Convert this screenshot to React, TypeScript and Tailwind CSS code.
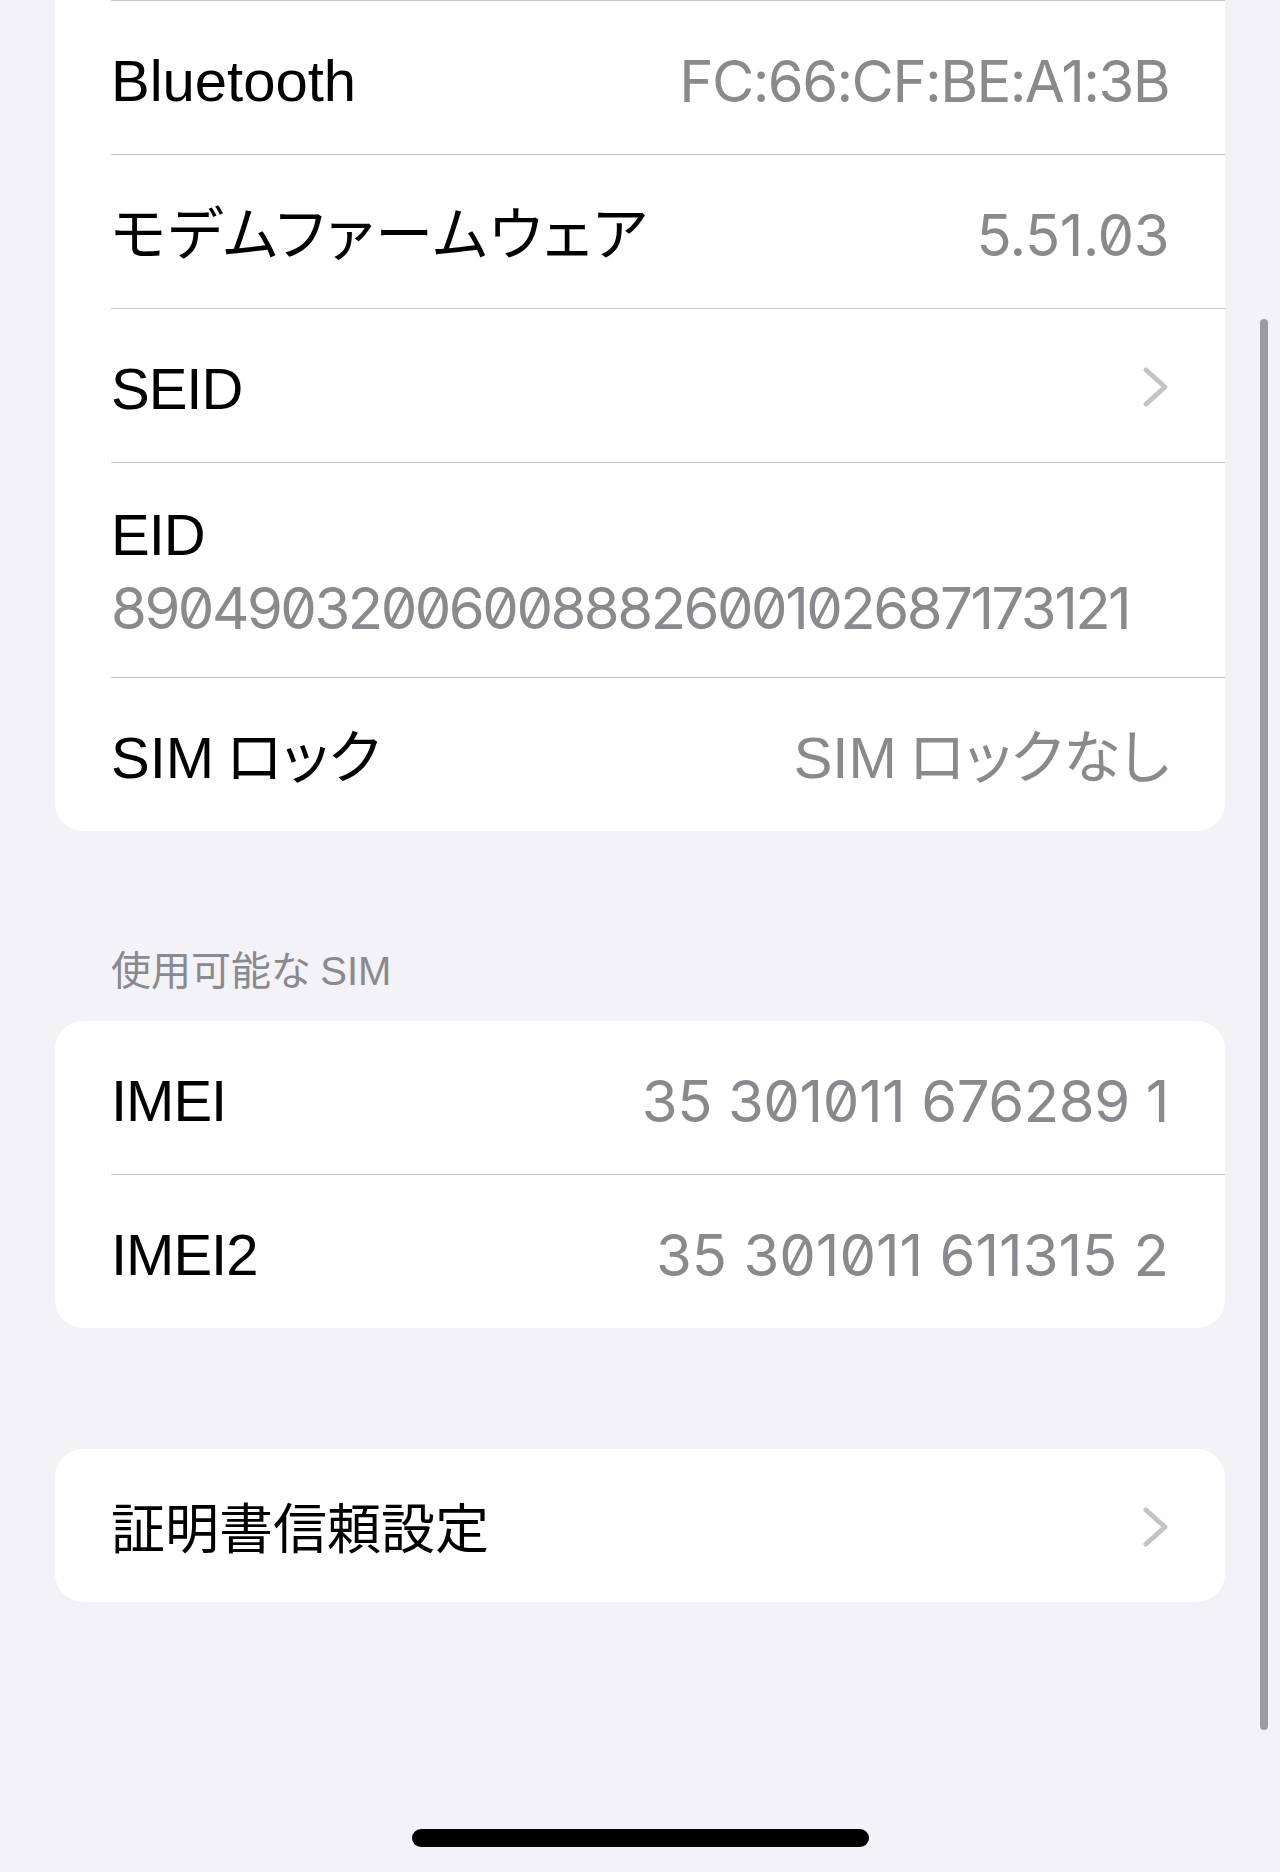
import React from "react";

const LATIN = "font-['Liberation_Sans','Noto_Sans_CJK_JP',sans-serif]";
const NUM = "font-['Inter','Liberation_Sans',sans-serif] [font-feature-settings:'zero']";

const Separator = () => (
  <div className="ml-[56px] h-px bg-[#c6c6c8]" />
);

const Chevron = () => (
  <svg width="28" height="42" viewBox="0 0 28 42" fill="none" className="mr-[-1px] -mt-[4px]">
    <polyline
      points="4,4 23,21 4,38"
      stroke="#c4c4c7"
      strokeWidth="5"
      strokeLinecap="round"
      strokeLinejoin="round"
    />
  </svg>
);

interface RowProps {
  label: React.ReactNode;
  value?: React.ReactNode;
  numeric?: boolean;
  chevron?: boolean;
}

const Row: React.FC<RowProps> = ({ label, value, numeric, chevron }) => (
  <div className="flex h-[153px] items-center justify-between pl-[56px] pr-[56px] pt-[7px]">
    <span className="text-[58px] leading-none text-black">{label}</span>
    {value && (
      <span
        className={`text-[58px] leading-none text-[#8a8a8e] ${numeric ? NUM : ""}`}
      >
        {value}
      </span>
    )}
    {chevron && <Chevron />}
  </div>
);

const Card: React.FC<{ children: React.ReactNode; className?: string }> = ({
  children,
  className = "",
}) => (
  <div className={`mx-[55px] bg-white ${className}`}>{children}</div>
);

export default function App() {
  return (
    <div className={`relative min-h-[1872px] w-[1280px] overflow-hidden bg-[#f2f2f7] ${LATIN} [font-feature-settings:'palt']`}>
      {/* first group, scrolled so its top is cut off */}
      <Card className="rounded-b-[28px]">
        <Separator />
        <Row
          label="Bluetooth"
          value={<span className="tracking-[-1.6px]">FC:66:CF:BE:A1:3B</span>}
          numeric
        />
        <Separator />
        <Row
          label={<span className="tracking-[2px]">モデムファームウェア</span>}
          value={<span className="tracking-[-0.5px]">5.51.03</span>}
          numeric
        />
        <Separator />
        <Row label={<span className="tracking-[-1px]">SEID</span>} chevron />
        <Separator />
        <div className="flex h-[214px] flex-col gap-[15px] pl-[56px] pr-[56px] pt-[43px]">
          <span className="text-[58px] leading-none tracking-[-1px] text-black">EID</span>
          <span className={`text-[58px] leading-none tracking-[-2.5px] text-[#8a8a8e] ${NUM}`}>
            89049032006008882600102687173121
          </span>
        </div>
        <Separator />
        <Row
          label={
            <>
              SIM<span className="ml-[12px]">ロック</span>
            </>
          }
          value={
            <>
              SIM<span className="ml-[12px]">ロックなし</span>
            </>
          }
        />
      </Card>

      <div className="flex h-[190px] items-end pb-[30px] pl-[111px] text-[40px] leading-none text-[#8a8a8e]">
        使用可能な<span className="ml-[10px]">SIM</span>
      </div>

      <Card className="rounded-[28px]">
        <Row
          label={<span className="tracking-[-1px]">IMEI</span>}
          value={<span className="tracking-[-0.4px]">35 301011 676289 1</span>}
          numeric
        />
        <Separator />
        <Row
          label={<span className="tracking-[-1px]">IMEI2</span>}
          value="35 301011 611315 2"
          numeric
        />
      </Card>

      <Card className="mt-[121px] rounded-[28px]">
        <Row label={<span className="text-[54px]">証明書信頼設定</span>} chevron />
      </Card>

      {/* home indicator */}
      <div className="mx-auto mt-[227px] h-[18px] w-[457px] rounded-full bg-black" />

      {/* scroll indicator */}
      <div className="absolute left-[1260px] top-[319px] h-[1411px] w-[8px] rounded-full bg-[#9c9ca0]" />
    </div>
  );
}
